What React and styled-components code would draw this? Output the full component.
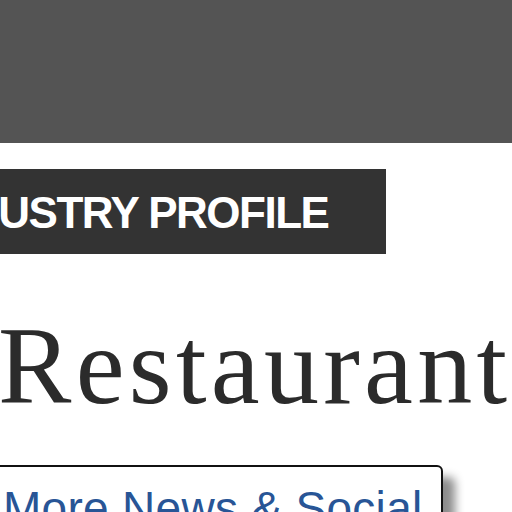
import React from "react";
import styled, { createGlobalStyle } from "styled-components";

const GlobalStyle = createGlobalStyle`
  html, body {
    margin: 0;
    padding: 0;
    background: #fff;
    overflow: hidden;
  }
`;

const Page = styled.div`
  width: 512px;
  height: 512px;
  overflow: hidden;
`;

const TopBar = styled.header`
  height: 143px;
  background-color: #545454;
`;

const Main = styled.main`
  margin-left: -118px;
`;

const SectionLabel = styled.div`
  display: flex;
  align-items: center;
  width: fit-content;
  height: 85px;
  margin-top: 26px;
  padding: 2px 58px 0 45px;
  box-sizing: border-box;
  background-color: #333333;
  color: #ffffff;
  font-family: "Liberation Sans", Arial, sans-serif;
  font-weight: 700;
  font-size: 44px;
  letter-spacing: -1.5px;
  white-space: nowrap;
`;

const Title = styled.h1`
  margin: 57px 0 0 116px;
  font-family: "Liberation Serif", Georgia, serif;
  font-weight: 400;
  font-size: 110px;
  letter-spacing: 4.3px;
  line-height: 1;
  color: #2b2b2b;
  white-space: nowrap;
`;

const NewsBox = styled.section`
  width: 478px;
  height: 120px;
  margin: 44px 0 0 83px;
  padding: 18px 19px 0 36px;
  box-sizing: border-box;
  border: 2px solid #111;
  border-top-right-radius: 6px;
  background: #fff;
  box-shadow: 12px 12px 10px rgba(0, 0, 0, 0.45);
`;

const NewsHeading = styled.h2`
  margin: 0;
  font-family: "Liberation Sans", Arial, sans-serif;
  font-weight: 400;
  font-size: 46px;
  letter-spacing: 0.3px;
  line-height: 1;
  color: #285596;
  white-space: nowrap;
`;

export default function App() {
  return (
    <Page>
      <GlobalStyle />
      <TopBar />
      <Main>
        <SectionLabel>INDUSTRY PROFILE</SectionLabel>
        <Title>Restaurants</Title>
        <NewsBox>
          <NewsHeading>More News &amp; Social</NewsHeading>
        </NewsBox>
      </Main>
    </Page>
  );
}
